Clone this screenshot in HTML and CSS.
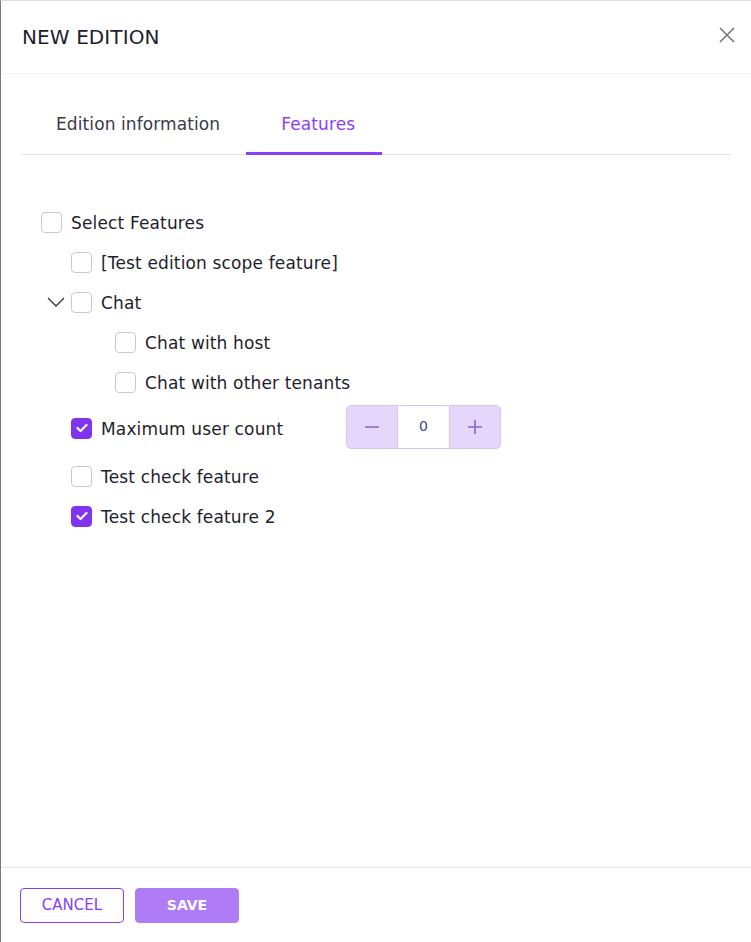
FILE: index.html
```html
<!DOCTYPE html>
<html>
<head>
<meta charset="utf-8">
<link rel="stylesheet" href="styles.css">
</head>
<body>
<div class="modal">
  <div class="modal-header">
    <h1 class="title">NEW EDITION</h1>
    <button class="close" aria-label="Close">
      <svg width="18" height="18" viewBox="0 0 18 18"><path d="M2 2 L16 16 M16 2 L2 16" stroke="#777" stroke-width="1.6" fill="none"/></svg>
    </button>
  </div>
  <div class="modal-body">
    <div class="tabs">
      <div class="tab">Edition information</div>
      <div class="tab active">Features</div>
    </div>
    <div class="tree">
      <div class="row lvl0">
        <span class="cb"></span><span class="label">Select Features</span>
      </div>
      <div class="row lvl1">
        <span class="cb"></span><span class="label">[Test edition scope feature]</span>
      </div>
      <div class="row lvl1 has-toggle">
        <span class="toggle"><svg width="18" height="10" viewBox="0 0 18 10"><path d="M1 1 L9 9 L17 1" stroke="#333" stroke-width="1.3" fill="none"/></svg></span>
        <span class="cb"></span><span class="label">Chat</span>
      </div>
      <div class="row lvl2">
        <span class="cb"></span><span class="label">Chat with host</span>
      </div>
      <div class="row lvl2">
        <span class="cb"></span><span class="label">Chat with other tenants</span>
      </div>
      <div class="row lvl1 row-number">
        <span class="cb checked"><svg width="12" height="10" viewBox="0 0 12 10"><path d="M1.5 5 L4.5 8 L10.5 2" stroke="#fff" stroke-width="2.2" fill="none" stroke-linecap="round" stroke-linejoin="round"/></svg></span><span class="label label-fixed">Maximum user count</span>
        <div class="spin">
          <span class="spin-btn"><svg width="14" height="14" viewBox="0 0 14 14"><path d="M0 7 H14" stroke="#8a63d2" stroke-width="1.6"/></svg></span>
          <span class="spin-val">0</span>
          <span class="spin-btn"><svg width="14" height="14" viewBox="0 0 14 14"><path d="M0 7 H14 M7 0 V14" stroke="#8a63d2" stroke-width="1.6"/></svg></span>
        </div>
      </div>
      <div class="row lvl1">
        <span class="cb"></span><span class="label">Test check feature</span>
      </div>
      <div class="row lvl1">
        <span class="cb checked"><svg width="12" height="10" viewBox="0 0 12 10"><path d="M1.5 5 L4.5 8 L10.5 2" stroke="#fff" stroke-width="2.2" fill="none" stroke-linecap="round" stroke-linejoin="round"/></svg></span><span class="label">Test check feature 2</span>
      </div>
    </div>
  </div>
  <div class="modal-footer">
    <button class="btn btn-outline">CANCEL</button>
    <button class="btn btn-primary">SAVE</button>
  </div>
</div>
</body>
</html>
```
FILE: styles.css
```css
* { box-sizing: border-box; }
html, body { margin: 0; padding: 0; background: #fff; }
body { font-family: "DejaVu Sans", "Open Sans", sans-serif; color: #222; }
.modal {
  width: 751px;
  height: 942px;
  border-left: 1px solid #7a7a7a;
  border-top: 1px solid #dcdcdc;
  display: flex;
  flex-direction: column;
  background: #fff;
}
.modal-header {
  height: 73px;
  flex: none;
  display: flex;
  align-items: center;
  justify-content: space-between;
  padding: 0 15px 0 21px;
  border-bottom: 1px solid #f2f2f2;
}
.title {
  margin: 0;
  font-size: 20px;
  font-weight: 500;
  color: #1e1e2d;
  letter-spacing: 0.1px;
}
.close {
  border: 0;
  background: none;
  padding: 0;
  width: 18px;
  height: 18px;
  margin-top: -4px;
  cursor: pointer;
}
.close svg { display: block; }
.modal-body {
  flex: 1;
  padding: 25px 20px 0 21px;
}
.tabs {
  display: flex;
  border-bottom: 1px solid #e2e2e2;
  height: 56px;
}
.tab {
  font-size: 17px;
  letter-spacing: 0.1px;
  color: #3a3a4a;
  display: flex;
  align-items: center;
  height: 56px;
  padding-bottom: 4px;
  margin-bottom: -1px;
  border-bottom: 3px solid transparent;
}
.tab:first-child { padding-left: 34px; padding-right: 26px; }
.tab.active {
  color: #8b3dff;
  border-bottom-color: #8b3dff;
  padding-left: 35px;
  padding-right: 27px;
}
.tree {
  padding-top: 47px;
  padding-left: 19px;
}
.row {
  display: flex;
  align-items: center;
  height: 40px;
  font-size: 17px;
  letter-spacing: 0.15px;
  color: #1e1e2d;
}
.row.lvl1 { padding-left: 30px; }
.row.lvl1.has-toggle { padding-left: 6px; }
.row.lvl2 { padding-left: 74px; }
.toggle {
  width: 24px;
  display: flex;
  align-items: center;
  justify-content: flex-start;
}
.toggle svg { display: block; }
.cb {
  width: 21px;
  height: 21px;
  border: 1px solid #c9c9c9;
  border-radius: 4px;
  flex: none;
  display: flex;
  align-items: center;
  justify-content: center;
  background: #fff;
}
.cb.checked {
  background: #8134f0;
  border-color: #8134f0;
}
.label { margin-left: 9px; padding-top: 2px; }
.label-fixed { width: 245px; }
.row-number { height: 48px; margin-top: 2px; margin-bottom: 4px; }
.spin {
  display: flex;
  height: 44px;
  width: 155px;
  border: 1px solid #d9c5f8;
  border-radius: 5px;
  background: #e5d6fb;
  overflow: hidden;
  margin-top: -2px;
}
.spin-btn {
  width: 50px;
  display: flex;
  align-items: center;
  justify-content: center;
}
.spin-val {
  flex: 1;
  background: #fff;
  display: flex;
  align-items: center;
  justify-content: center;
  font-size: 14px;
  color: #3a4a8a;
  border-left: 1px solid #d9c5f8;
  border-right: 1px solid #d9c5f8;
  padding-bottom: 2px;
}
.modal-footer {
  flex: none;
  height: 75px;
  border-top: 1px solid #ebebeb;
  box-shadow: 0 -1px 2px rgba(0,0,0,0.04);
  display: flex;
  align-items: center;
  gap: 11px;
  padding: 0 0 0 19px;
}
.btn {
  width: 104px;
  height: 35px;
  border-radius: 4px;
  font-family: inherit;
  cursor: pointer;
}
.btn-outline {
  background: #fff;
  border: 1px solid #8b3dff;
  color: #8b3dff;
  font-size: 15px;
}
.btn-primary {
  background: #b07cf5;
  border: 1px solid #b07cf5;
  color: #fff;
  font-weight: 600;
  font-size: 14px;
}
```
